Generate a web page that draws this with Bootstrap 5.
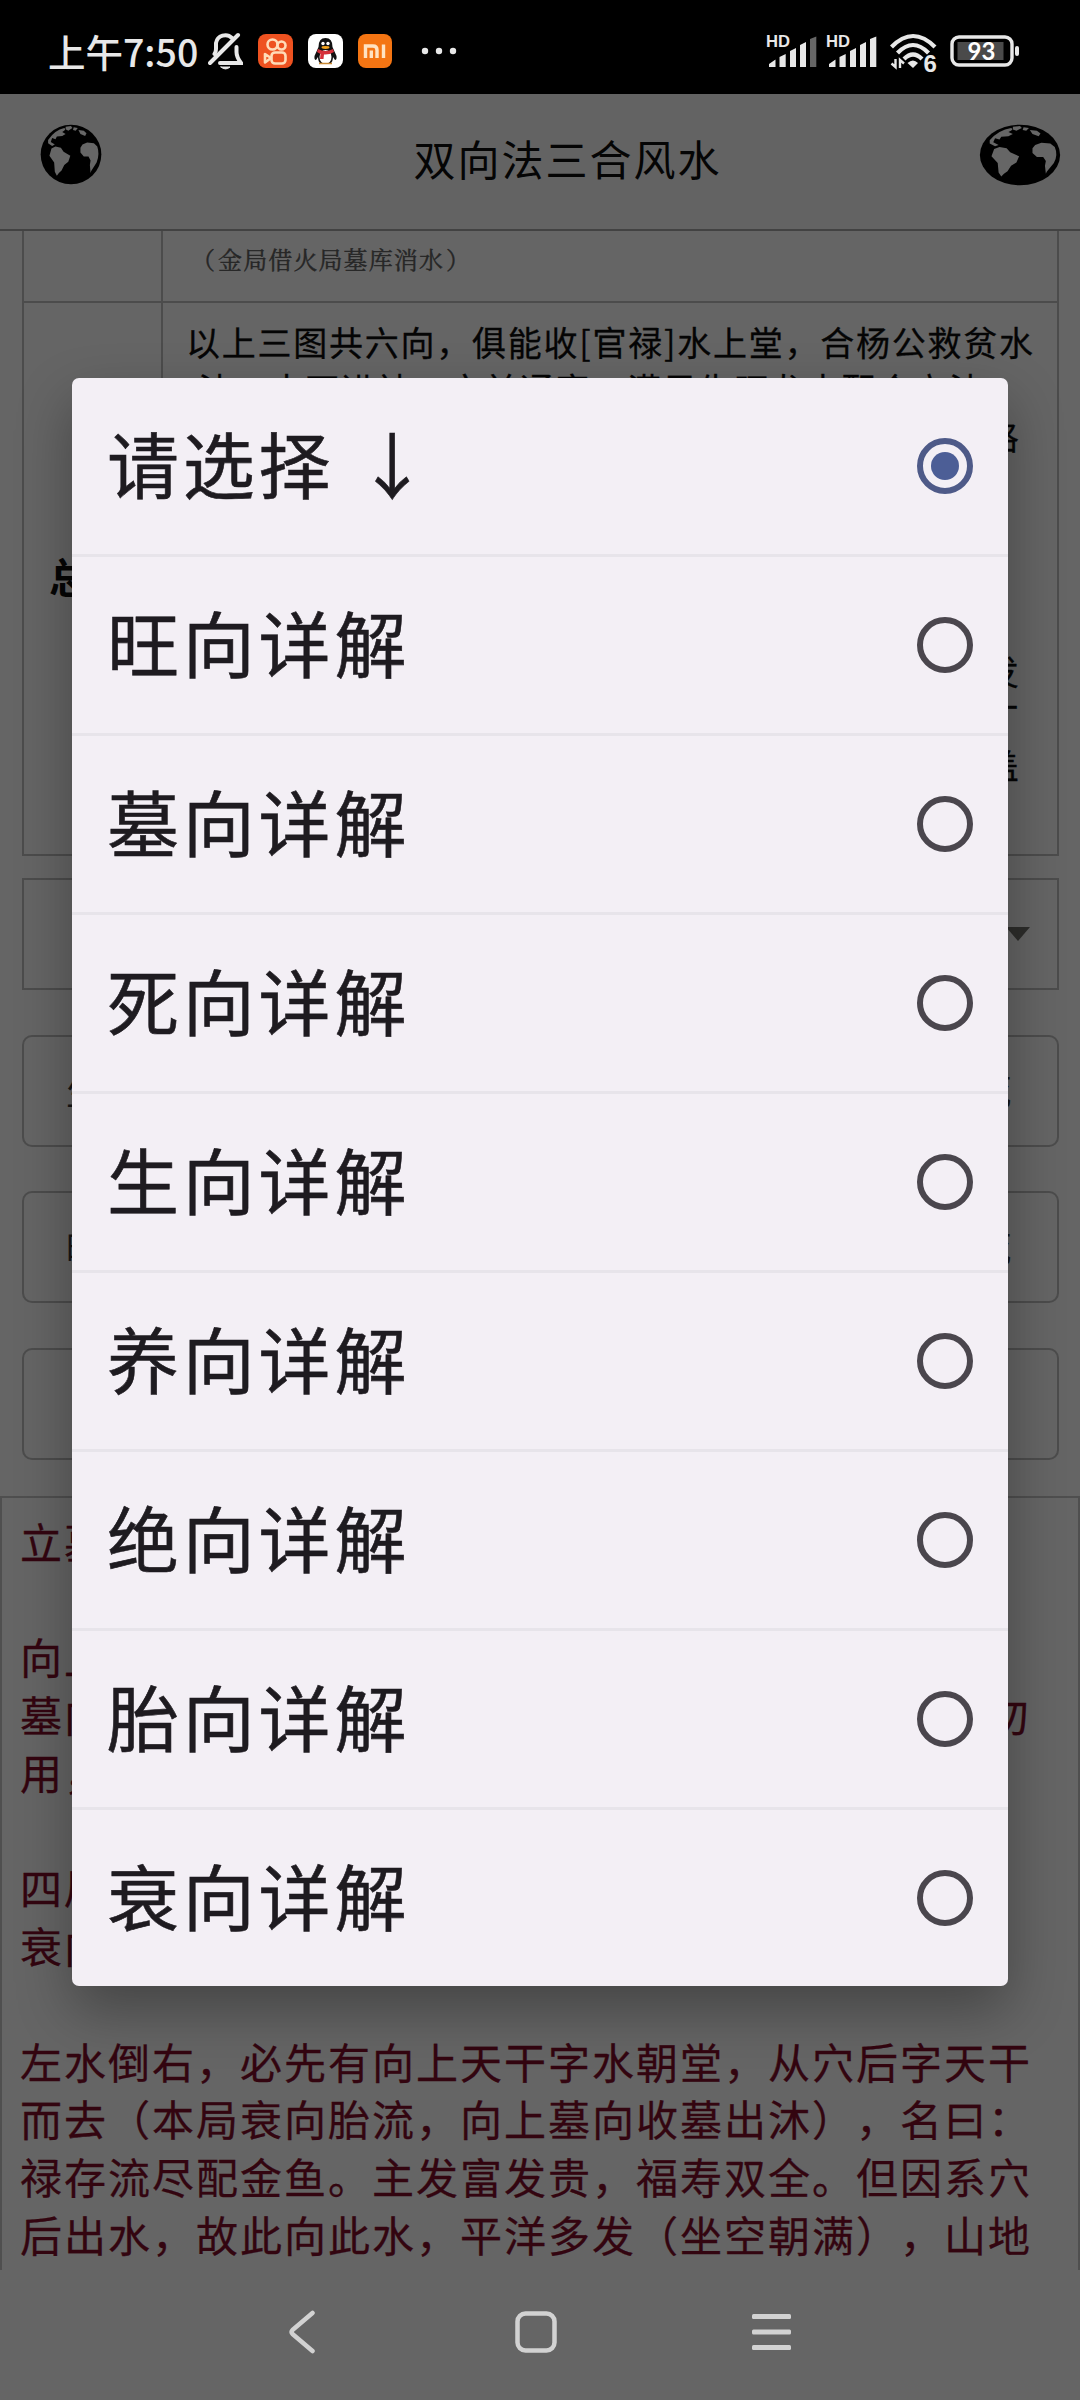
<!DOCTYPE html>
<html lang="zh-CN">
<head>
    <meta charset="UTF-8">
    <meta name="viewport" content="width=device-width, initial-scale=1.0">
    <title>双向法三合风水</title>
    <link href="https://cdn.jsdelivr.net/npm/bootstrap@5.3.0/dist/css/bootstrap.min.css" rel="stylesheet">
    <script src="https://cdn.jsdelivr.net/npm/bootstrap@5.3.0/dist/js/bootstrap.bundle.min.js"></script>
    <style>
        body {
            width: 1080px;
            height: 2400px;
            background: #656565;
            color: #050505;
            font-family: "Noto Sans CJK SC", sans-serif;
            font-feature-settings: "chws" 0;
            text-spacing-trim: space-all;
            overflow: hidden;
        }
        svg {
            display: block;
            flex-shrink: 0;
        }
        /* Status bar */
        .status-bar {
            height: 94px;
            background: #000;
            padding: 8px 60px 0 48px;
            color: #e8e8e8;
        }
        .clock {
            font-size: 37.5px;
            font-weight: 500;
            line-height: 40px;
            width: 160px;
            white-space: nowrap;
        }
        .app-icon {
            margin-right: 15px;
        }
        /* Title bar */
        .title-bar {
            height: 137px;
            padding: 0 19px 14px 40px;
            border-bottom: 2px solid #424242;
            background: #636363;
        }
        .title-text {
            font-size: 42px;
            letter-spacing: 2px;
            line-height: 60px;
            padding: 6px 0 0 54px;
        }
        /* Page behind the dialog */
        .page-body {
            height: 2039px;
            overflow: hidden;
        }
        .sheet {
            margin: 0 21.5px 0 22px;
            border: 2px solid #4c4c4c;
            border-top: 0;
        }
        .sheet-row {
            display: grid;
            grid-template-columns: 137px 1fr;
        }
        .sheet-row > div + div {
            border-left: 2px solid #4c4c4c;
        }
        .sheet-row + .sheet-row {
            border-top: 2px solid #4c4c4c;
        }
        .row-note {
            height: 70px;
        }
        .note-text {
            font-family: "Noto Serif CJK SC", "Noto Sans CJK SC", serif;
            font-size: 24px;
            letter-spacing: 1.1px;
            color: #262626;
            line-height: 30px;
            padding: 13px 0 0 28px;
            -webkit-text-stroke: .4px;
        }
        .note-text span {
            padding: 0 2px;
        }
        .row-main {
            height: 553px;
        }
        .row-title {
            font-size: 41px;
            font-weight: 700;
            padding: 0 5px 6px 0;
        }
        .line-list {
            padding: 15px 0 0 23px;
            font-size: 34px;
            letter-spacing: 1.75px;
            line-height: 47px;
            white-space: nowrap;
            -webkit-text-stroke: .3px;
        }
        .line-list .shifted {
            padding-left: 12px;
        }
        .line-list .tail {
            padding-right: 36px;
            text-align: right;
        }
        .select-box {
            margin: 22px 21.5px 0 22px;
            height: 112px;
            border: 2px solid #4c4c4c;
            padding-right: 27px;
        }
        .page-btn {
            margin: 44.5px 21.5px 0 22px;
            height: 112px;
            border: 2px solid #4c4c4c;
            border-radius: 10px;
            padding: 0 45px 0 42px;
            font-size: 35px;
            color: #161616;
        }
        .verse-panel {
            margin-top: 36px;
            height: 774px;
            border: 2px solid #4f4f4f;
            border-bottom: 0;
            padding: 14px 47px 0 18px;
            font-size: 42px;
            letter-spacing: 2px;
            line-height: 57.8px;
            color: #330510;
            white-space: nowrap;
            overflow: hidden;
            -webkit-text-stroke: .3px;
        }
        .verse-panel p {
            margin-bottom: 57.8px;
        }
        .nav-keys {
            height: 130px;
            padding: 0 289px 6px 288px;
        }
        /* Dialog */
        .picker {
            position: absolute;
            left: 72px;
            top: 378px;
            width: 936px;
            height: 1608px;
            border-radius: 7px;
            background: #f3eff5;
            box-shadow: 0 24px 56px rgba(0, 0, 0, .32);
            overflow: hidden;
        }
        .picker-item {
            height: 179px;
            padding: 0 35px 1px 35px;
            border-bottom: 3px solid #e7e4ea;
            color: #1e1b20;
            font-size: 72px;
            letter-spacing: 3.8px;
            word-spacing: 2px;
            -webkit-text-stroke: .6px;
        }
        .picker-item:last-child {
            border-bottom: 0;
            padding-bottom: 4px;
        }
        .picker-item span {
            line-height: 100px;
            padding-bottom: 8px;
        }
        .ring {
            width: 56px;
            height: 56px;
            border: 6px solid #4a464d;
            border-radius: 50%;
        }
        .ring.picked {
            border-color: #4e5a88;
        }
        .ring.picked::after {
            content: "";
            width: 28px;
            height: 28px;
            border-radius: 50%;
            background: #4c5e96;
        }
    </style>
</head>
<body class="position-relative">

<svg width="0" height="0" class="position-absolute">
    <symbol id="globe" viewBox="0 0 184 184" preserveAspectRatio="none">
        <circle cx="92" cy="92" r="90" fill="#000"/>
        <g fill="#666">
            <path d="M24 48 Q44 18 72 12 Q80 16 66 24 L76 30 L66 36 L50 38 L46 46 L36 42 L32 54 L44 62 L36 66 L24 58 Z"/>
            <path d="M76 8 L92 6 L96 12 L84 20 L76 16 Z"/>
            <path d="M100 10 L112 12 L106 20 L98 18 Z"/>
            <path d="M114 18 L130 20 L138 28 L134 36 L120 30 Z"/>
            <path d="M34 74 L46 68 L62 72 L70 84 L90 96 L84 114 L72 124 L64 140 L56 148 L50 156 L44 144 L42 116 L28 96 Z"/>
            <path d="M126 62 L140 56 L160 58 L170 68 Q178 92 168 116 L152 142 L150 148 L148 124 L150 110 L144 98 L130 98 L120 86 L120 72 Z"/>
        </g>
    </symbol>
</svg>

<!-- Status bar -->
<div class="status-bar d-flex align-items-center">
    <div class="clock">上午7:50</div>
    <svg class="app-icon" width="35" height="38" viewBox="0 0 35 38" fill="none" stroke="#e8e8e8" stroke-width="4" stroke-linecap="round">
        <path d="M24 6 A9.500 9.500 0 0 0 8 11 V17 Q8 20 6.500 22"/>
        <path d="M28.500 15 V20 Q28.500 25 33 31 H12"/>
        <path d="M2 31 L30 3"/>
        <path d="M13 35 H22 Q17.500 39 13 35 Z" fill="#e8e8e8" stroke-width="1"/>
    </svg>
    <svg class="app-icon" width="35" height="34" viewBox="0 0 35 34">
        <rect width="35" height="34" rx="8" fill="#ee5220"/>
        <g fill="none" stroke="#ffdcb8" stroke-width="2.600">
            <circle cx="14.500" cy="10.500" r="5"/>
            <circle cx="23.500" cy="11.500" r="4"/>
            <rect x="13.500" y="18.500" width="14" height="11" rx="3.500"/>
            <path d="M13 24 L7 20 V28.500 Z" stroke-linejoin="round"/>
        </g>
    </svg>
    <svg class="app-icon" width="35" height="34" viewBox="0 0 35 34">
        <rect width="35" height="34" rx="8" fill="#fff"/>
        <path d="M17.500 4 Q24.500 4 24.500 13 L28.500 22 Q29 26 27 26 L25 23 Q25 28 22 30 H13 Q10 28 10 23 L8 26 Q6 26 6.500 22 L10.500 13 Q10.500 4 17.500 4 Z" fill="#111"/>
        <ellipse cx="17.500" cy="23" rx="6" ry="7" fill="#fff"/>
        <path d="M10 15 Q17.500 19 25 15 L26 18 Q21 21 16 20.500 L15.500 25 H12 L12.500 20 L9 18 Z" fill="#d5303a"/>
        <circle cx="15" cy="9.500" r="1.700" fill="#fff"/>
        <circle cx="20" cy="9.500" r="1.700" fill="#fff"/>
        <ellipse cx="17.500" cy="13.500" rx="4" ry="1.400" fill="#f2a21c"/>
        <path d="M11 29.500 H24" stroke="#c98a35" stroke-width="1.500"/>
    </svg>
    <svg class="app-icon" width="34" height="34" viewBox="0 0 34 34">
        <rect width="34" height="34" rx="8" fill="#f47513"/>
        <g fill="none" stroke="#ffe3c2" stroke-width="3.400">
            <path d="M7.500 24 V12 H15 Q19 12 19 16 V24"/>
            <path d="M13.300 16.500 V24"/>
            <path d="M25.500 10.500 V24"/>
        </g>
    </svg>
    <svg width="60" height="34" viewBox="0 0 60 34" fill="#e8e8e8">
        <circle cx="18" cy="17" r="3.200"/>
        <circle cx="32" cy="17" r="3.200"/>
        <circle cx="46" cy="17" r="3.200"/>
    </svg>
    <svg class="ms-auto" width="56" height="42" viewBox="0 0 56 42" fill="#e8e8e8">
        <text x="0" y="17" font-family="Liberation Sans, sans-serif" font-weight="700" font-size="16" textLength="24" lengthAdjust="spacingAndGlyphs">HD</text>
        <path d="M3 37 V34 L9.500 29.500 V37 Z M13.500 37 V27 L19.700 24 V37 Z M24 37 V21 L30 18 V37 Z M34 37 V15 L40 12 V37 Z"/>
        <path d="M44 37 V9 L50.300 6.500 V37 Z" fill="#666"/>
    </svg>
    <svg class="ms-1" width="56" height="42" viewBox="0 0 56 42" fill="#e8e8e8">
        <text x="0" y="17" font-family="Liberation Sans, sans-serif" font-weight="700" font-size="16" textLength="24" lengthAdjust="spacingAndGlyphs">HD</text>
        <path d="M3 37 V34 L9.500 29.500 V37 Z M13.500 37 V27 L19.700 24 V37 Z M24 37 V21 L30 18 V37 Z M34 37 V15 L40 12 V37 Z M44 37 V9 L50.300 6.500 V37 Z"/>
    </svg>
    <svg class="ms-2" width="56" height="58" viewBox="0 -8 56 58" fill="none" stroke="#e8e8e8" stroke-width="4.200">
        <path d="M1.500 17 Q23 -5 45 17"/>
        <path d="M7.500 23 Q23 7 38.500 23"/>
        <path d="M14 29 Q23 20 32 29"/>
        <path d="M17.500 33 Q23 28 28 33 L23 38 Z" fill="#e8e8e8" stroke="none"/>
        <path d="M5.500 29 V37 L1.500 33.500 M10 38 V30 L14 33.500" stroke-width="2.400"/>
        <text x="33.500" y="41.500" font-family="Liberation Sans, sans-serif" font-weight="700" font-size="24" fill="#e8e8e8" stroke="none">6</text>
    </svg>
    <svg class="ms-1" width="70" height="32" viewBox="0 0 70 32">
        <rect x="2" y="2" width="60" height="28" rx="7" fill="none" stroke="#e8e8e8" stroke-width="3.400"/>
        <rect x="7.500" y="7" width="46" height="18" fill="#4a4a4a"/>
        <rect x="65" y="11" width="4" height="10" rx="2" fill="#e8e8e8"/>
        <text x="31.500" y="24.500" text-anchor="middle" font-family="Lato, sans-serif" font-weight="700" font-size="24" fill="#fff">93</text>
    </svg>
</div>

<!-- Title bar -->
<div class="title-bar d-flex justify-content-between align-items-center">
    <svg width="62" height="61"><use href="#globe"/></svg>
    <div class="title-text">双向法三合风水</div>
    <svg width="82" height="62"><use href="#globe"/></svg>
</div>

<div class="page-body">
    <div class="sheet">
        <div class="sheet-row row-note">
            <div></div>
            <div class="note-text">（<span>金局借火局墓库消水</span>）</div>
        </div>
        <div class="sheet-row row-main">
            <div class="row-title d-flex align-items-center justify-content-center">总论</div>
            <div class="line-list">
                <div>以上三图共六向，俱能收[官禄]水上堂，合杨公救贫水</div>
                <div class="shifted">法，水不进神，文前通窍，满局生旺龙水配合立法</div>
                <div class="tail">格</div>
                <div>&nbsp;</div>
                <div>&nbsp;</div>
                <div>&nbsp;</div>
                <div>&nbsp;</div>
                <div class="tail">发</div>
                <div class="tail">丁</div>
                <div class="tail">盖</div>
            </div>
        </div>
    </div>

    <div class="select-box d-flex align-items-center justify-content-end">
        <svg width="24" height="14" viewBox="0 0 24 14"><path d="M0 0 H24 L12 14 Z" fill="#2d2d2b"/></svg>
    </div>
    <div class="page-btn d-flex align-items-center justify-content-between"><span>生</span><span>死</span></div>
    <div class="page-btn d-flex align-items-center justify-content-between"><span>旺</span><span>死</span></div>
    <div class="page-btn"></div>

    <div class="verse-panel">
        <p>立墓</p>
        <p>
            向上<br>
            <span class="d-flex justify-content-between"><span>墓向</span><span>勿</span></span>
            用，
        </p>
        <p>四局<br>衰向</p>
        <p>
            左水倒右，必先有向上天干字水朝堂，从穴后字天干<br>
            而去（本局衰向胎流，向上墓向收墓出沐），名曰：<br>
            禄存流尽配金鱼。主发富发贵，福寿双全。但因系穴<br>
            后出水，故此向此水，平洋多发（坐空朝满），山地
        </p>
    </div>
</div>

<!-- System navigation -->
<div class="nav-keys d-flex align-items-center justify-content-between">
    <svg width="28" height="44" viewBox="0 0 28 44" fill="none" stroke="#d2d2d2" stroke-width="4.500" stroke-linecap="round" stroke-linejoin="round">
        <path d="M24.500 3 L4.500 20 Q2.500 22 4.500 24 L24.500 41"/>
    </svg>
    <svg class="ms-1" width="42" height="42" viewBox="0 0 42 42" fill="none" stroke="#d2d2d2" stroke-width="4.500">
        <rect x="2.500" y="2.500" width="37" height="37" rx="8"/>
    </svg>
    <svg width="39" height="38" viewBox="0 0 39 38" fill="#d2d2d2">
        <rect width="39" height="5" y="1" rx="1.500"/>
        <rect width="39" height="5" y="16.500" rx="1.500"/>
        <rect width="39" height="5" y="32" rx="1.500"/>
    </svg>
</div>

<!-- Option dialog -->
<div class="picker">
    <div class="picker-item d-flex align-items-center justify-content-between"><span>请选择 ↓</span><div class="ring picked d-flex align-items-center justify-content-center"></div></div>
    <div class="picker-item d-flex align-items-center justify-content-between"><span>旺向详解</span><div class="ring"></div></div>
    <div class="picker-item d-flex align-items-center justify-content-between"><span>墓向详解</span><div class="ring"></div></div>
    <div class="picker-item d-flex align-items-center justify-content-between"><span>死向详解</span><div class="ring"></div></div>
    <div class="picker-item d-flex align-items-center justify-content-between"><span>生向详解</span><div class="ring"></div></div>
    <div class="picker-item d-flex align-items-center justify-content-between"><span>养向详解</span><div class="ring"></div></div>
    <div class="picker-item d-flex align-items-center justify-content-between"><span>绝向详解</span><div class="ring"></div></div>
    <div class="picker-item d-flex align-items-center justify-content-between"><span>胎向详解</span><div class="ring"></div></div>
    <div class="picker-item d-flex align-items-center justify-content-between"><span>衰向详解</span><div class="ring"></div></div>
</div>

</body>
</html>
